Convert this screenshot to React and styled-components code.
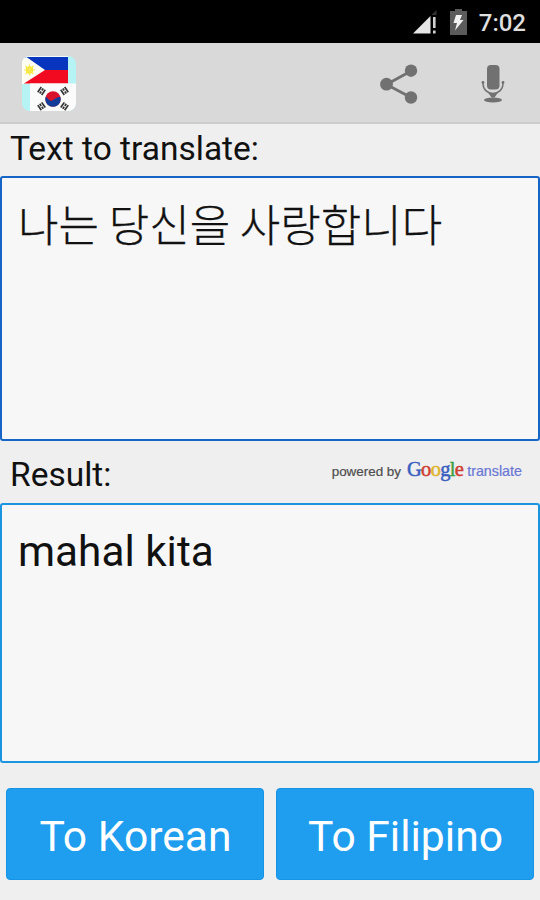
import React from 'react'
import styled, { createGlobalStyle } from 'styled-components'

const GlobalStyle = createGlobalStyle`
  * {
    box-sizing: border-box;
  }

  body {
    margin: 0;
    background: #efefef;
    font-family: Roboto, 'Noto Sans CJK KR', sans-serif;
  }
`

const Screen = styled.div`
  display: flex;
  flex-direction: column;
  width: 540px;
  height: 900px;
  overflow: hidden;
  background: #efefef;
  color: #111;
`

const StatusBar = styled.div`
  display: flex;
  align-items: center;
  justify-content: flex-end;
  height: 43px;
  padding: 1px 14px 0 0;
  background: #000;
`

const Clock = styled.span`
  margin-left: 12px;
  padding-top: 2px;
  color: #dedede;
  font-size: 24px;
  font-weight: 500;
  line-height: 28px;
`

const BatteryIcon = styled.svg`
  margin-left: 13px;
`

const ActionBar = styled.header`
  display: flex;
  align-items: center;
  height: 81px;
  padding: 2px 35px 0 22px;
  border-bottom: 2px solid #cdcdcd;
  background: #d9d9d9;
`

const AppIcon = styled.svg`
  margin-right: auto;
`

const IconButton = styled.button`
  display: flex;
  margin-left: ${p => p.$gap || 0}px;
  padding: 0;
  border: 0;
  background: none;
  color: #717171;
`

const LabelRow = styled.div`
  display: flex;
  align-items: center;
  justify-content: space-between;
  height: ${p => p.$height}px;
  padding: ${p => p.$top || 0}px 18px ${p => p.$bottom || 0}px 10px;
`

const Label = styled.label`
  font-size: 33.5px;
  line-height: 40px;
  white-space: nowrap;
`

const TextBox = styled.div`
  height: ${p => p.$height}px;
  padding: ${p => p.$top}px 16px 0;
  border: 2px solid ${p => p.$color};
  border-radius: 3px;
  background: #f7f7f7;
  font-size: 42.3px;
  line-height: 50px;
`

const Korean = styled.span`
  display: block;
  font-family: 'Noto Sans CJK KR', sans-serif;
  font-size: 44px;
  font-weight: 300;
  white-space: nowrap;
  -webkit-text-stroke: 0.3px #111;
`

const Attribution = styled.div`
  display: flex;
  align-items: baseline;
  height: 24px;
  margin-top: -12px;
  color: #4d4d4d;
  font-family: 'Liberation Sans', sans-serif;
  font-size: 13.4px;
  line-height: 24px;
  -webkit-text-stroke: 0.2px currentColor;
`

const Google = styled.span`
  margin: 0 4px 0 6px;
  font-family: 'Liberation Serif', serif;
  font-size: 20.5px;
  letter-spacing: -0.7px;
`

const Letter = styled.span`
  color: ${p => p.$color};
  -webkit-text-stroke: 0.5px ${p => p.$color};
`

const Translate = styled.span`
  color: #6a76d4;
  font-size: 14.3px;
`

const Actions = styled.div`
  display: flex;
  gap: 12px;
  padding: 25px 6px 0;
`

const Button = styled.button`
  flex: 1;
  height: 92px;
  padding: 4px 0 0;
  border: 1px solid #1793e6;
  border-radius: 4px;
  background: #1f9eef;
  color: #fff;
  font-family: Roboto, sans-serif;
  font-size: 42.6px;
  text-indent: 1px;
  white-space: nowrap;
`

const googleLetters = [
  ['G', '#3a5fc0'],
  ['o', '#cf4034'],
  ['o', '#dfb52a'],
  ['g', '#3a5fc0'],
  ['l', '#3f9f45'],
  ['e', '#cf4034'],
]

const Signal = () => (
  <svg width="24" height="24" viewBox="0 0 24 24">
    <path d="M17.500 6V23.500H0Z" fill="#e6e6e6" />
    <path d="M18.500 5 23.500 0v5z" fill="#333" />
    <path d="M20 7h2.600v11H20zM20 20.500h2.600v3H20z" fill="#d0d0d0" />
  </svg>
)

const Battery = () => (
  <BatteryIcon width="17" height="26" viewBox="0 0 17 26">
    <path d="M5 0h7v2h5v24H0V2h5z" fill="#5b5b5b" />
    <path d="M6 6h6l-2 5h3.500L5 21.500 7 14H3.500z" fill="#f2f2f2" />
  </BatteryIcon>
)

// two full bars with a broken one between them
const Trigram = ({ x, y, angle }) => (
  <g transform={`translate(${x} ${y}) rotate(${angle})`} stroke="#333" strokeWidth="1.700">
    <path d="M-3.100-2.400h6.200M-3.100 0h2.600M.5 0h2.600M-3.100 2.400h6.200" />
  </g>
)

const Flags = () => (
  <AppIcon width="54" height="55" viewBox="0 0 54 55">
    <defs>
      <clipPath id="tile">
        <rect width="54" height="55" rx="8" />
      </clipPath>
    </defs>
    <g clipPath="url(#tile)">
      <rect width="54" height="55" fill="#b5f3f5" />
      <path d="M0 0h46v28H0z" fill="#f4faf8" />
      <path d="M3 1h43v14H3z" fill="#0735bd" />
      <path d="M2 27.500h44V14H2z" fill="#f10a20" />
      <path d="M0 0h3l20 14L2 27.500H0z" fill="#fffdf4" />
      <circle cx="7.500" cy="14" r="3.700" fill="#f5e625" />
      <path d="M7.500 8.500v11M2 14h11M3.500 10l8 8M11.500 10l-8 8" stroke="#f5ea55" strokeWidth="1.200" />
      <path d="M8 27.500h46V55H8z" fill="#fbfbfb" />
      <circle cx="31" cy="43" r="7.700" fill="#d9122c" />
      <path d="M23.600 41a7.700 7.700 0 1 0 14.800 0c-1.500 0-3 0-5 1.500s-3.500 3-5.400 2-2.400-3.500-4.400-3.500z" fill="#123c97" />
      <Trigram x={19.500} y={35} angle={-55} />
      <Trigram x={42.500} y={35} angle={55} />
      <Trigram x={19.500} y={50.300} angle={55} />
      <Trigram x={42.500} y={50.300} angle={-55} />
    </g>
  </AppIcon>
)

const ShareIcon = () => (
  <svg width="38" height="40" viewBox="0 0 38 40" fill="currentColor">
    <path d="M31 7 6.500 20.500 31 33.500" fill="none" stroke="currentColor" strokeWidth="2.800" />
    <circle cx="31" cy="6.700" r="6.200" />
    <circle cx="6.500" cy="20.200" r="6.400" />
    <circle cx="31" cy="33.500" r="6.200" />
  </svg>
)

const MicIcon = () => (
  <svg width="24" height="38" viewBox="0 0 24 38" fill="currentColor">
    <rect x="6" y="0" width="12.500" height="24.500" rx="4" />
    <path d="M2 18c0 14 20 14 20 0" fill="none" stroke="currentColor" strokeWidth="1.500" />
    <circle cx="2" cy="17.500" r="1.400" />
    <circle cx="22" cy="17.500" r="1.400" />
    <path d="M7 27.500q5 2 10 0l-3.500 5h-3z" />
    <ellipse cx="12" cy="35" rx="9" ry="2.600" />
  </svg>
)

const App = () => (
  <Screen>
    <GlobalStyle />
    <StatusBar>
      <Signal />
      <Battery />
      <Clock>7:02</Clock>
    </StatusBar>
    <ActionBar>
      <Flags />
      <IconButton aria-label="Share">
        <ShareIcon />
      </IconButton>
      <IconButton aria-label="Speak" $gap={63}>
        <MicIcon />
      </IconButton>
    </ActionBar>
    <LabelRow $height={52} $bottom={2}>
      <Label>Text to translate:</Label>
    </LabelRow>
    <TextBox $height={265} $top={20} $color="#1565c6">
      <Korean>나는 당신을 사랑합니다</Korean>
    </TextBox>
    <LabelRow $height={62} $top={5}>
      <Label>Result:</Label>
      <Attribution>
        powered by
        <Google>
          {googleLetters.map(([letter, color], index) => (
            <Letter key={index} $color={color}>{letter}</Letter>
          ))}
        </Google>
        <Translate>translate</Translate>
      </Attribution>
    </LabelRow>
    <TextBox $height={260} $top={22} $color="#1b95e0">mahal kita</TextBox>
    <Actions>
      <Button>To Korean</Button>
      <Button>To Filipino</Button>
    </Actions>
  </Screen>
)

export default App
